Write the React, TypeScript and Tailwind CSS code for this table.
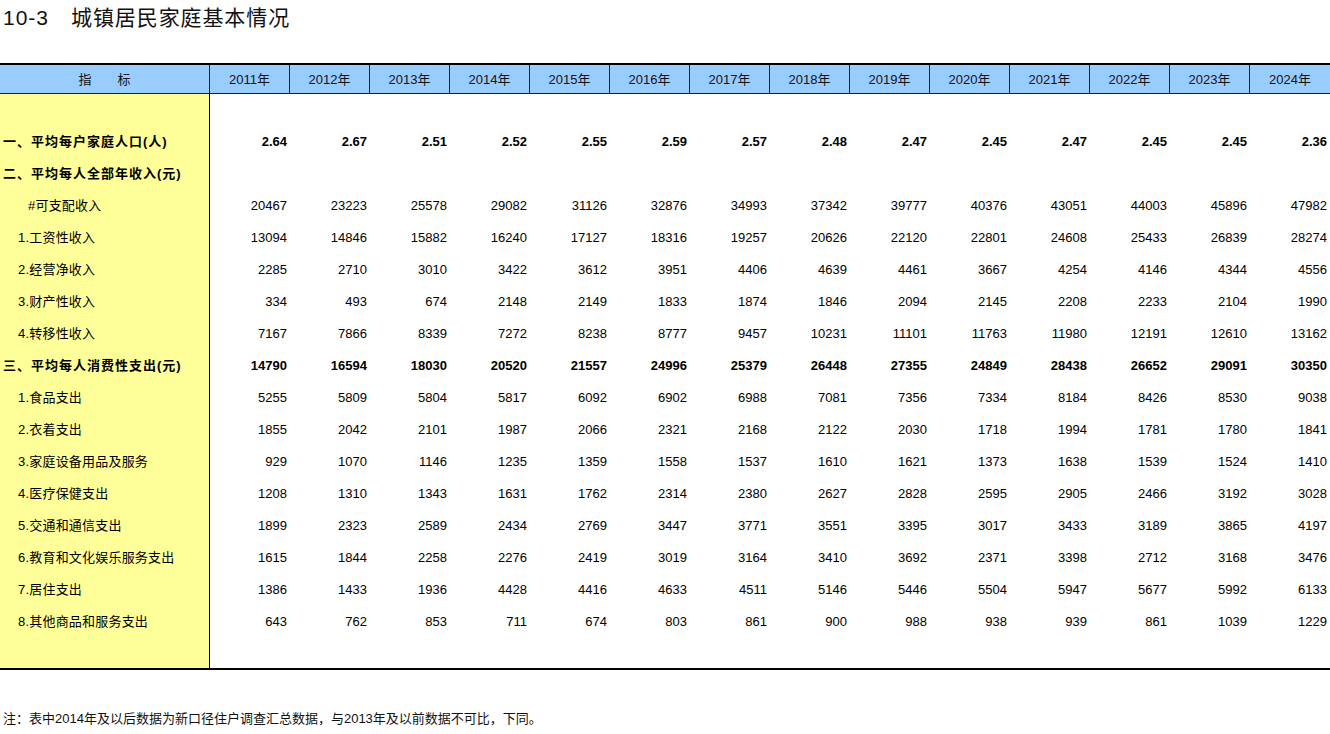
import React from "react";

const years = [2011, 2012, 2013, 2014, 2015, 2016, 2017, 2018, 2019, 2020, 2021, 2022, 2023, 2024];

type Row = { label: string; indent: "bold" | "item" | "sub"; values: (string | number)[] };

const rows: Row[] = [
  { label: "一、平均每户家庭人口(人)", indent: "bold", values: ["2.64", "2.67", "2.51", "2.52", "2.55", "2.59", "2.57", "2.48", "2.47", "2.45", "2.47", "2.45", "2.45", "2.36"] },
  { label: "二、平均每人全部年收入(元)", indent: "bold", values: [] },
  { label: "#可支配收入", indent: "sub", values: [20467, 23223, 25578, 29082, 31126, 32876, 34993, 37342, 39777, 40376, 43051, 44003, 45896, 47982] },
  { label: "1.工资性收入", indent: "item", values: [13094, 14846, 15882, 16240, 17127, 18316, 19257, 20626, 22120, 22801, 24608, 25433, 26839, 28274] },
  { label: "2.经营净收入", indent: "item", values: [2285, 2710, 3010, 3422, 3612, 3951, 4406, 4639, 4461, 3667, 4254, 4146, 4344, 4556] },
  { label: "3.财产性收入", indent: "item", values: [334, 493, 674, 2148, 2149, 1833, 1874, 1846, 2094, 2145, 2208, 2233, 2104, 1990] },
  { label: "4.转移性收入", indent: "item", values: [7167, 7866, 8339, 7272, 8238, 8777, 9457, 10231, 11101, 11763, 11980, 12191, 12610, 13162] },
  { label: "三、平均每人消费性支出(元)", indent: "bold", values: [14790, 16594, 18030, 20520, 21557, 24996, 25379, 26448, 27355, 24849, 28438, 26652, 29091, 30350] },
  { label: "1.食品支出", indent: "item", values: [5255, 5809, 5804, 5817, 6092, 6902, 6988, 7081, 7356, 7334, 8184, 8426, 8530, 9038] },
  { label: "2.衣着支出", indent: "item", values: [1855, 2042, 2101, 1987, 2066, 2321, 2168, 2122, 2030, 1718, 1994, 1781, 1780, 1841] },
  { label: "3.家庭设备用品及服务", indent: "item", values: [929, 1070, 1146, 1235, 1359, 1558, 1537, 1610, 1621, 1373, 1638, 1539, 1524, 1410] },
  { label: "4.医疗保健支出", indent: "item", values: [1208, 1310, 1343, 1631, 1762, 2314, 2380, 2627, 2828, 2595, 2905, 2466, 3192, 3028] },
  { label: "5.交通和通信支出", indent: "item", values: [1899, 2323, 2589, 2434, 2769, 3447, 3771, 3551, 3395, 3017, 3433, 3189, 3865, 4197] },
  { label: "6.教育和文化娱乐服务支出", indent: "item", values: [1615, 1844, 2258, 2276, 2419, 3019, 3164, 3410, 3692, 2371, 3398, 2712, 3168, 3476] },
  { label: "7.居住支出", indent: "item", values: [1386, 1433, 1936, 4428, 4416, 4633, 4511, 5146, 5446, 5504, 5947, 5677, 5992, 6133] },
  { label: "8.其他商品和服务支出", indent: "item", values: [643, 762, 853, 711, 674, 803, 861, 900, 988, 938, 939, 861, 1039, 1229] },
];

const gridCls = "grid grid-cols-[210px_repeat(14,80px)]";

function EmptyRow({ h }: { h: string }) {
  return (
    <div className={`${gridCls} ${h}`}>
      <div className="bg-[#ffff99] border-r border-black" />
      {years.map((y) => (
        <div key={y} />
      ))}
    </div>
  );
}

export default function App() {
  return (
    <div
      className="w-[1330px] h-[734px] bg-white text-black overflow-hidden"
      style={{ fontFamily: '"Liberation Sans", "Noto Sans CJK SC", sans-serif' }}
    >
      {/* Title */}
      <div className="h-[63px] pl-[3px] pt-[5px]">
        <div className="flex items-center h-[26px] text-[21px] leading-[26px] text-[#111]">
          <span className="tracking-[1px]">10-3</span>
          <span className="ml-[22px] tracking-[0.9px]">城镇居民家庭基本情况</span>
        </div>
      </div>

      {/* Table */}
      <div className="w-full border-t-2 border-b-2 border-black">
        {/* Header */}
        <div className={`${gridCls} h-[29px] bg-[#99ccff] border-b border-[#1a1a33] text-[13px] text-[#111]`}>
          <div className="flex items-center justify-center pt-[1px] border-r border-[#1a1a33]">
            <span>指　　标</span>
          </div>
          {years.map((y, i) => (
            <div
              key={y}
              className={`flex items-center justify-center pt-[1px] ${i < years.length - 1 ? "border-r border-[#1a1a33]" : ""}`}
            >
              {y}年
            </div>
          ))}
        </div>

        {/* Body */}
        <EmptyRow h="h-[32px]" />
        {rows.map((r) => {
          const bold = r.indent === "bold";
          const pl = r.indent === "bold" ? "pl-[3px]" : r.indent === "sub" ? "pl-[28px]" : "pl-[18px]";
          return (
            <div key={r.label} className={`${gridCls} h-[32px] text-[13px] ${bold ? "font-bold" : ""}`}>
              <div
                className={`bg-[#ffff99] border-r border-black flex items-center whitespace-nowrap ${pl} ${bold ? "tracking-[1px]" : "tracking-[0.2px]"}`}
              >
                {r.label}
              </div>
              {years.map((y, i) => (
                <div key={y} className="flex items-center justify-end pr-[3px]">
                  {r.values[i] !== undefined ? String(r.values[i]) : ""}
                </div>
              ))}
            </div>
          );
        })}
        <EmptyRow h="h-[30px]" />
      </div>

      {/* Footnote */}
      <div className="mt-[41px] pl-[3px] text-[13px] leading-[16px] text-[#111]">
        注：表中2014年及以后数据为新口径住户调查汇总数据，与2013年及以前数据不可比，下同。
      </div>
    </div>
  );
}
